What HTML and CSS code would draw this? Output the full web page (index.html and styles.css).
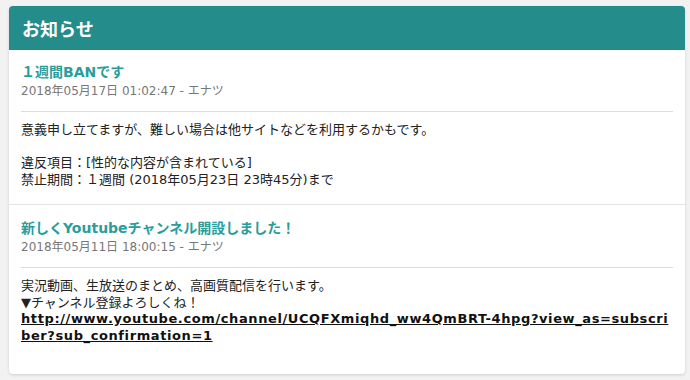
FILE: index.html
```html
<!DOCTYPE html>
<html>
<head>
    <title>お知らせ</title>
    <link rel="stylesheet" href="styles.css">
</head>
<body>
    <div class="news-box">
        <div class="news-header">お知らせ</div>

        <div class="news-item">
            <div class="news-title">１週間BANです</div>
            <div class="news-date">2018年05月17日 01:02:47 - エナツ</div>
            <hr class="news-line">
            <div class="news-body">
                意義申し立てますが、難しい場合は他サイトなどを利用するかもです。<br>
                <br>
                違反項目：[性的な内容が含まれている]<br>
                禁止期間：１週間 (2018年05月23日 23時45分)まで
            </div>
        </div>

        <div class="news-item">
            <div class="news-title">新しくYoutubeチャンネル開設しました！</div>
            <div class="news-date">2018年05月11日 18:00:15 - エナツ</div>
            <hr class="news-line">
            <div class="news-body">
                実況動画、生放送のまとめ、高画質配信を行います。<br>
                ▼チャンネル登録よろしくね！<br>
                <a class="news-link" href="#">http://www.youtube.com/channel/UCQFXmiqhd_ww4QmBRT-4hpg?view_as=subscriber?sub_confirmation=1</a>
            </div>
        </div>
    </div>
</body>
</html>
```

FILE: styles.css
```css
body {
    margin: 0;
    padding: 6px 5px 9px 9px;
    background-color: #f2f2f2;
    font-family: "DejaVu Sans", "Noto Sans CJK JP", sans-serif;
    color: #222;
}

.news-box {
    background-color: #fff;
    border-radius: 4px;
    box-shadow: 0 1px 3px rgba(0, 0, 0, 0.15);
    padding-bottom: 14px;
}

.news-header {
    background-color: #258c8c;
    color: #fff;
    font-size: 18px;
    font-weight: bold;
    line-height: 44px;
    padding: 0 13px;
    border-radius: 4px 4px 0 0;
    font-family: "Noto Sans CJK JP", sans-serif;
}

.news-item {
    padding: 12px 12px 15px;
}

.news-item + .news-item {
    border-top: 1px solid #e3e3e3;
    padding-top: 13px;
}

.news-title {
    font-size: 14px;
    font-weight: bold;
    line-height: 20px;
    color: #2a9d9d;
}

.news-date {
    font-size: 12px;
    line-height: 18px;
    color: #777;
}

.news-line {
    border: 0;
    border-top: 1px solid #ddd;
    margin: 11px 0 10px;
}

.news-body {
    font-size: 13px;
    line-height: 16.7px;
}

.news-link {
    color: #111;
    font-weight: bold;
    letter-spacing: 0.6px;
    word-break: break-all;
}
```
